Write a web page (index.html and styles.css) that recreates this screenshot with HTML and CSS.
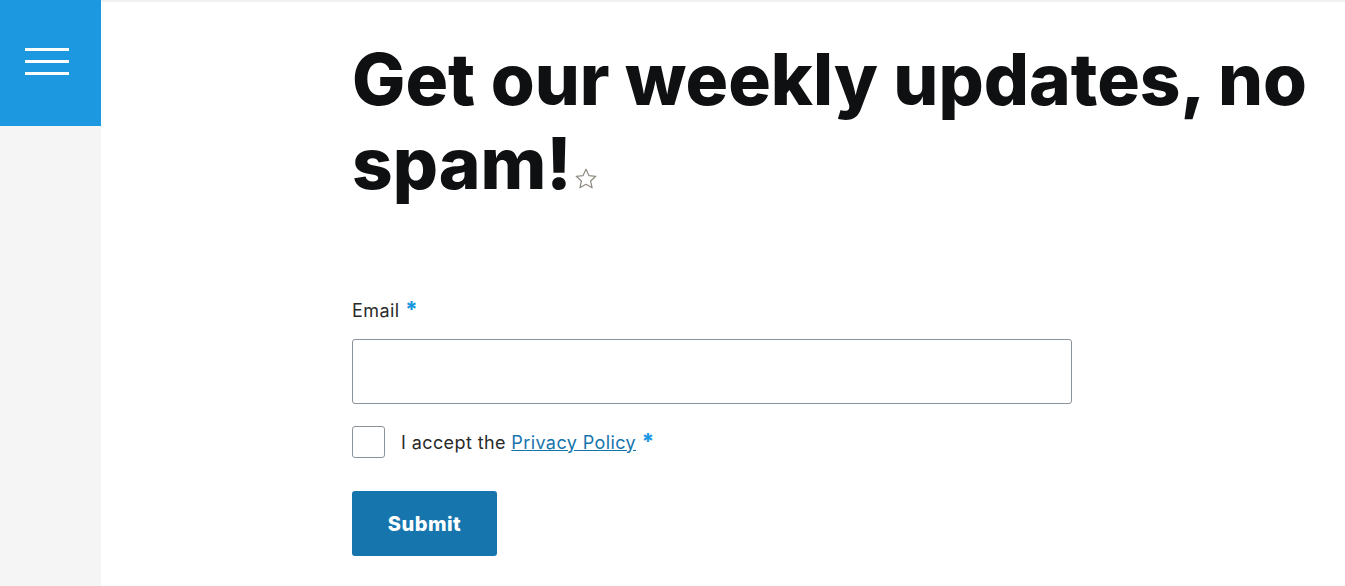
FILE: index.html
```html
<!DOCTYPE html>
<html>
<head>
<meta charset="UTF-8">
<title>Newsletter</title>
<link rel="stylesheet" href="styles.css">
</head>
<body>

<div class="page">

	<!-- 왼쪽 메뉴 -->
	<div class="sidebar">
		<div class="menuBtn">
			<span></span>
			<span></span>
			<span></span>
		</div>
	</div>

	<!-- 본문 -->
	<div class="content">
		<h1 class="title">Get our weekly updates, no spam!<svg class="star" width="24" height="24" viewBox="0 0 24 24"><path d="M12 2.2l2.9 6.4 6.9.7-5.2 4.7 1.5 6.8L12 17.3l-6.1 3.5 1.5-6.8-5.2-4.7 6.9-.7z" fill="none" stroke="#8f8a80" stroke-width="1.2" stroke-linejoin="round"/></svg></h1>

		<form class="form">
			<label class="label" for="email">Email <span class="req">*</span></label>
			<input class="field" id="email" type="email">

			<div class="check">
				<span class="box"></span>
				<span class="checkText">I accept the <a href="#">Privacy Policy</a> <span class="req">*</span></span>
			</div>

			<button class="submit" type="button">Submit</button>
		</form>
	</div>
</div>

</body>
</html>
```

FILE: styles.css
```css
/* 기본 스타일 */
html, body {
	width: 100%;
	height: 100%;
	margin: 0;
	padding: 0;
	background: #fff;
	font-family: "Inter", "Lato", sans-serif;
	color: #1c1c1c;
}

.page {
	display: flex;
	min-height: 100%;
	border-top: 2px solid #f1f1f1;
	box-sizing: border-box;
}

/* 메뉴 스타일 */
.sidebar {
	width: 101px;
	flex: none;
	background: #f4f5f4;
	margin-top: -2px;
}
.menuBtn {
	height: 126px;
	box-sizing: border-box;
	padding: 0 0 3px 25px;
	background: #1b98e0;
	display: flex;
	flex-direction: column;
	align-items: flex-start;
	justify-content: center;
	gap: 9px;
}
.menuBtn span {
	display: block;
	width: 44px;
	height: 3px;
	background: #fff;
}

/* 본문 스타일 */
.content {
	padding: 35px 0 0 251px;
}
.title {
	margin: 0;
	width: 960px;
	font-size: 71px;
	font-weight: 800;
	line-height: 84px;
	color: #0f1011;
}
.star {
	margin-left: 2px;
	vertical-align: -2px;
}

.form {
	margin-top: 95px;
	display: flex;
	flex-direction: column;
	align-items: flex-start;
	letter-spacing: 0.4px;
}
.label {
	font-size: 18px;
	color: #2a2a2a;
}
.req {
	color: #1b98e0;
	font-weight: 800;
	font-size: 22px;
	line-height: 18px;
}
.field {
	margin-top: 18px;
	width: 720px;
	height: 65px;
	box-sizing: border-box;
	border: 1px solid #8a929a;
	border-radius: 3px;
}
.check {
	margin-top: 22px;
	display: flex;
	align-items: center;
	gap: 16px;
	font-size: 18px;
	color: #2a2a2a;
}
.box {
	width: 33px;
	height: 32px;
	box-sizing: border-box;
	border: 1px solid #8a929a;
	border-radius: 3px;
}
.checkText a {
	color: #1675ad;
}
.submit {
	margin-top: 33px;
	width: 145px;
	height: 65px;
	border: none;
	border-radius: 3px;
	background: #1675ad;
	color: #fff;
	font-family: inherit;
	font-size: 20px;
	font-weight: 800;
	letter-spacing: 0.5px;
}
```
